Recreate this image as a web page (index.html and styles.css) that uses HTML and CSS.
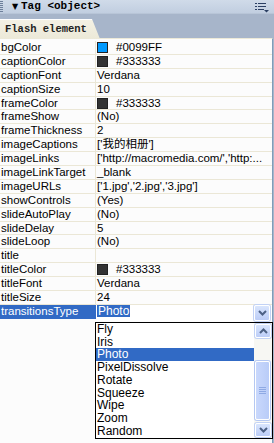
FILE: index.html
```html
<!DOCTYPE html>
<html>
<head>
    <meta charset="utf-8">
    <link rel="stylesheet" href="styles.css">
</head>
<body>
    <div class="panel">
        <div class="titlebar">
            <span class="grip"></span>
            <span class="arrow">&#9660;</span>
            <span class="title">Tag &lt;object&gt;</span>
            <svg class="menu-icon" width="14" height="11" viewBox="0 0 14 11">
                <rect x="0" y="1" width="2" height="1" fill="#2b3f63"/>
                <rect x="3" y="1" width="8" height="1" fill="#2b3f63"/>
                <rect x="0" y="4" width="2" height="1" fill="#2b3f63"/>
                <rect x="3" y="4" width="8" height="1" fill="#2b3f63"/>
                <rect x="0" y="7" width="2" height="1" fill="#2b3f63"/>
                <rect x="3" y="7" width="6" height="1" fill="#2b3f63"/>
                <polygon points="9,8 14,8 11.5,10.5" fill="#2b3f63"/>
            </svg>
        </div>

        <div class="tabs">
            <div class="tab">Flash element</div>
        </div>

        <div class="props">
            <div class="row"><div class="name">bgColor</div><div class="value"><span class="swatch" style="background:#0099FF"></span>#0099FF</div></div>
            <div class="row"><div class="name">captionColor</div><div class="value"><span class="swatch" style="background:#333333"></span>#333333</div></div>
            <div class="row"><div class="name">captionFont</div><div class="value">Verdana</div></div>
            <div class="row"><div class="name">captionSize</div><div class="value">10</div></div>
            <div class="row"><div class="name">frameColor</div><div class="value"><span class="swatch" style="background:#333333"></span>#333333</div></div>
            <div class="row"><div class="name">frameShow</div><div class="value">(No)</div></div>
            <div class="row"><div class="name">frameThickness</div><div class="value">2</div></div>
            <div class="row"><div class="name">imageCaptions</div><div class="value">['我的相册']</div></div>
            <div class="row"><div class="name">imageLinks</div><div class="value">['http://macromedia.com/','http:...</div></div>
            <div class="row"><div class="name">imageLinkTarget</div><div class="value">_blank</div></div>
            <div class="row"><div class="name">imageURLs</div><div class="value">['1.jpg','2.jpg','3.jpg']</div></div>
            <div class="row"><div class="name">showControls</div><div class="value">(Yes)</div></div>
            <div class="row"><div class="name">slideAutoPlay</div><div class="value">(No)</div></div>
            <div class="row"><div class="name">slideDelay</div><div class="value">5</div></div>
            <div class="row"><div class="name">slideLoop</div><div class="value">(No)</div></div>
            <div class="row"><div class="name">title</div><div class="value"></div></div>
            <div class="row"><div class="name">titleColor</div><div class="value"><span class="swatch" style="background:#333333"></span>#333333</div></div>
            <div class="row"><div class="name">titleFont</div><div class="value">Verdana</div></div>
            <div class="row"><div class="name">titleSize</div><div class="value">24</div></div>
            <div class="row active">
                <div class="name">transitionsType</div>
                <div class="value">
                    <div class="select">
                        <span class="sel-text">Photo</span>
                        <span class="xp-btn drop-btn">
                            <svg width="9" height="6" viewBox="0 0 9 6"><polyline points="1,1 4.5,4.5 8,1" fill="none" stroke="#4d6185" stroke-width="2"/></svg>
                        </span>

                        <div class="dropdown">
                            <ul class="options">
                                <li>Fly</li>
                                <li>Iris</li>
                                <li class="selected">Photo</li>
                                <li>PixelDissolve</li>
                                <li>Rotate</li>
                                <li>Squeeze</li>
                                <li>Wipe</li>
                                <li>Zoom</li>
                                <li>Random</li>
                            </ul>
                            <div class="scrollbar">
                                <span class="xp-btn">
                                    <svg width="9" height="6" viewBox="0 0 9 6"><polyline points="1,5 4.5,1.5 8,5" fill="none" stroke="#4d6185" stroke-width="2"/></svg>
                                </span>
                                <div class="track">
                                    <div class="thumb">
                                        <svg width="7" height="7" viewBox="0 0 7 7">
                                            <rect x="0" y="0" width="7" height="1" fill="#8ea9e4"/>
                                            <rect x="0" y="2" width="7" height="1" fill="#8ea9e4"/>
                                            <rect x="0" y="4" width="7" height="1" fill="#8ea9e4"/>
                                            <rect x="0" y="6" width="7" height="1" fill="#8ea9e4"/>
                                        </svg>
                                    </div>
                                </div>
                                <span class="xp-btn">
                                    <svg width="9" height="6" viewBox="0 0 9 6"><polyline points="1,1 4.5,4.5 8,1" fill="none" stroke="#4d6185" stroke-width="2"/></svg>
                                </span>
                            </div>
                        </div>
                    </div>
                </div>
            </div>
        </div>
    </div>
</body>
</html>
```

FILE: styles.css
```css
* {
    box-sizing: border-box;
    margin: 0;
    padding: 0;
}

body {
    width: 274px;
    height: 443px;
    overflow: hidden;
    background: #a7b5ca;
    font-family: "Liberation Sans", Arial, "Noto Sans CJK SC", sans-serif;
    font-size: 11.5px;
    color: #000;
}

.panel {
    display: flex;
    flex-direction: column;
    height: 443px;
}

/* title bar */
.titlebar {
    height: 13px;
    display: flex;
    align-items: center;
    background: linear-gradient(#d0dbe9, #c1cee0);
    font-family: "Liberation Mono", monospace;
    font-weight: bold;
    font-size: 11px;
}

.grip {
    width: 3px;
    height: 11px;
    margin-right: 9px;
    background: repeating-linear-gradient(#6d7f9a 0 1px, transparent 1px 2px);
}

.arrow {
    font-size: 8px;
    width: 9px;
    font-family: "DejaVu Sans", sans-serif;
}

.title {
    line-height: 13px;
}

.menu-icon {
    margin-left: auto;
    margin-right: 5px;
    margin-top: 2px;
}

/* tab strip */
.tabs {
    height: 25px;
    padding-top: 5px;
    background: #a7b5ca;
    border-top: 1px solid #b8c5d7;
}

.tab {
    width: 100px;
    height: 20px;
    padding: 3px 0 0 5px;
    background: linear-gradient(#f4f1e4, #ece9d8);
    border-top: 1px solid #fff;
    clip-path: polygon(0 0, 92px 0, 100% 100%, 0 100%);
    font-family: "Liberation Mono", monospace;
    font-weight: bold;
    font-size: 10.5px;
    color: #222;
}

/* property grid */
.props {
    flex: 1;
    width: 273px;
    padding-top: 2px;
    background: #fcfcfc;
    border-top: 1px solid #ece9d8;
    border-right: 1px solid #7f9db9;
}

.row {
    display: flex;
    height: 13.9px;
    line-height: 13px;
    border-bottom: 1px solid #ebe7d6;
}

.name {
    width: 96px;
    padding-left: 1px;
    border-right: 1px solid #ebe7d6;
    white-space: nowrap;
}

.value {
    flex: 1;
    padding-left: 1px;
    white-space: nowrap;
    overflow: hidden;
    display: flex;
    align-items: center;
}

.swatch {
    width: 11px;
    height: 11px;
    margin-right: 8px;
    border: 1px solid #222;
}

.row.active {
    border-bottom: none;
}

.row.active .name {
    background: #316ac5;
    color: #fff;
    border-right: none;
}

.row.active .value {
    overflow: visible;
    padding-left: 0;
    align-items: flex-start;
}

/* dropdown */
.select {
    position: relative;
    width: 100%;
    height: 16px;
    display: flex;
    align-items: flex-start;
    background: #fff;
}

.sel-text {
    margin: 0 0 0 1px;
    padding: 0 1px;
    height: 12px;
    line-height: 12px;
    background: #316ac5;
    color: #fff;
    font-size: 12px;
}

.xp-btn {
    width: 16px;
    height: 15px;
    display: flex;
    align-items: center;
    justify-content: center;
    background: linear-gradient(#d9e5fd, #bccdf7);
    border: 1px solid #fff;
    border-radius: 2px;
    box-shadow: 0 0 0 1px #c2d2f5;
}

.drop-btn {
    margin-left: auto;
    margin-right: 2px;
    height: 16px;
}

.dropdown {
    position: absolute;
    top: 17px;
    left: -1px;
    right: -1px;
    height: 117px;
    display: flex;
    background: #fff;
    border: 1px solid #000;
}

.options {
    flex: 1;
    list-style: none;
}

.options li {
    height: 12.75px;
    line-height: 12.75px;
    padding-left: 1px;
    font-size: 12px;
}

.options li.selected {
    background: #316ac5;
    color: #fff;
}

.scrollbar {
    width: 18px;
    padding: 1px 2px 1px 1px;
    display: flex;
    flex-direction: column;
    background: #f7f7f3;
}

.scrollbar .xp-btn {
    height: 14px;
}

.track {
    flex: 1;
    padding: 23px 0 2px;
}

.thumb {
    height: 59px;
    display: flex;
    align-items: center;
    justify-content: center;
    background: linear-gradient(90deg, #c9d8fc, #b9ccf8);
    border: 1px solid #fff;
    border-radius: 2px;
    box-shadow: 0 0 0 1px #b5c8f2;
}
```
